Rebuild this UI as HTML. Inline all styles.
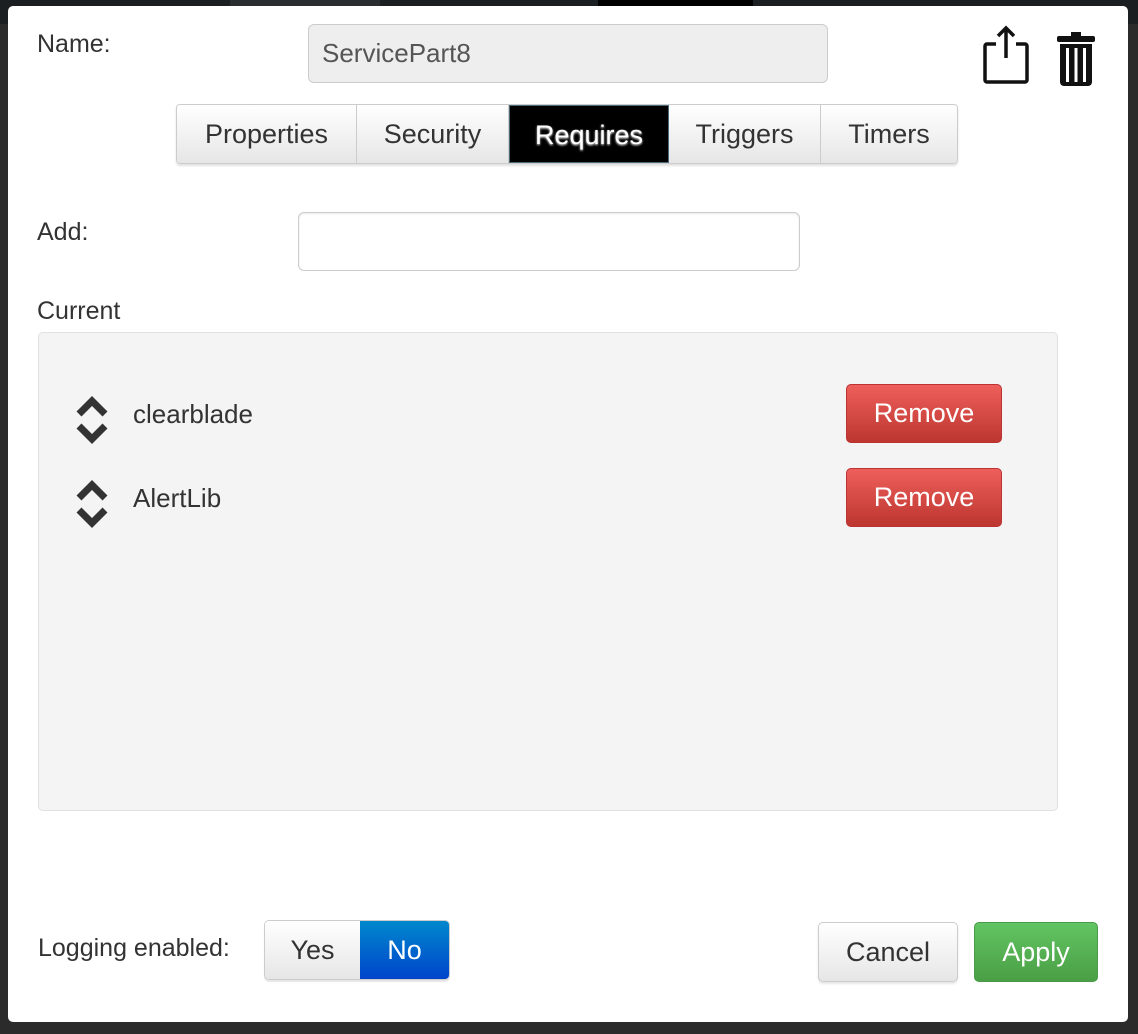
<!DOCTYPE html>
<html><head><meta charset="utf-8">
<style>
*{box-sizing:border-box;margin:0;padding:0}
body{width:1138px;height:1034px;background:#2b2b2b;position:relative;overflow:hidden;font-family:"Liberation Sans",Arial,sans-serif;color:#333}
.top{position:absolute;left:0;top:0;width:1138px;height:24px;background:#1b1f22}
.dlg{position:absolute;left:8px;top:6px;width:1120px;height:1016px;background:#fff;border-radius:5px}
.a{position:absolute}
.lbl{font-size:25px;color:#333}
.tabs{position:absolute;left:176px;top:104px;height:60px;display:flex;border:1px solid #ccc;border-radius:4px;box-shadow:0 2px 2px rgba(0,0,0,.12);overflow:hidden}
.tabs div{height:58px;line-height:58px;font-size:27px;padding:0 0;text-align:center;background:linear-gradient(#fff,#e6e6e6);border-right:1px solid #ccc;color:#333}
.tabs div.on{background:#000;color:#fff;text-shadow:0 1px 2px #fff;border:1px solid #4a6a7a}
.btn{position:absolute;border-radius:5px;font-size:27px;text-align:center}
.red{background:linear-gradient(#ee5f5b,#bd362f);color:#fff;border:1px solid #b33;width:156px;height:59px;line-height:57px;left:846px}
</style></head><body>
<div class="top"></div>
<div style="position:absolute;left:230px;top:0;width:150px;height:6px;background:#2a2e31"></div>
<div style="position:absolute;left:598px;top:0;width:155px;height:6px;background:#000"></div>
<div class="dlg"></div>
<div class="a lbl" style="left:37px;top:30px">Name:</div>
<div class="a" style="left:308px;top:24px;width:520px;height:59px;background:#eee;border:1px solid #ccc;border-radius:6px;font-size:26px;line-height:57px;padding-left:13px;color:#555">ServicePart8</div>
<svg class="a" style="left:980px;top:24px" width="52" height="62" viewBox="0 0 52 62"><path d="M16 20H7a2 2 0 0 0-2 2v34a2 2 0 0 0 2 2h38a2 2 0 0 0 2-2V22a2 2 0 0 0-2-2h-9M26 34V4M18 12l8-8 8 8" fill="none" stroke="#111" stroke-width="3.5"/></svg>
<svg class="a" style="left:1054px;top:30px" width="44" height="58" viewBox="0 0 44 58"><rect x="17" y="2" width="10" height="5" fill="#111"/><rect x="3" y="6" width="38" height="6" rx="2" fill="#111"/><path d="M6 14h32v38a4 4 0 0 1-4 4H10a4 4 0 0 1-4-4z" fill="#111"/><rect x="12" y="18" width="3" height="34" fill="#fff"/><rect x="20.5" y="18" width="3" height="34" fill="#fff"/><rect x="29" y="18" width="3" height="34" fill="#fff"/></svg>
<div class="tabs">
<div style="width:180px">Properties</div>
<div style="width:152px">Security</div>
<div class="on" style="width:160px">Requires</div>
<div style="width:152px">Triggers</div>
<div style="width:136px;border-right:0">Timers</div>
</div>
<div class="a lbl" style="left:37px;top:218px">Add:</div>
<div class="a" style="left:298px;top:212px;width:502px;height:59px;border:1px solid #ccc;border-radius:6px;box-shadow:inset 0 1px 2px rgba(0,0,0,.08)"></div>
<div class="a lbl" style="left:37px;top:297px">Current</div>
<div class="a" style="left:38px;top:332px;width:1020px;height:479px;background:#f4f4f4;border:1px solid #e0e0e0;border-radius:5px"></div>
<svg class="a" style="left:74px;top:394px" width="36" height="54" viewBox="0 0 36 54"><path d="M5 20L18 7l13 13M5 32l13 13 13-13" fill="none" stroke="#333" stroke-width="7"/></svg>
<div class="a" style="left:133px;top:399px;font-size:26px">clearblade</div>
<div class="btn red" style="top:384px">Remove</div>
<svg class="a" style="left:74px;top:478px" width="36" height="54" viewBox="0 0 36 54"><path d="M5 20L18 7l13 13M5 32l13 13 13-13" fill="none" stroke="#333" stroke-width="7"/></svg>
<div class="a" style="left:133px;top:483px;font-size:26px">AlertLib</div>
<div class="btn red" style="top:468px">Remove</div>
<div class="a lbl" style="left:38px;top:934px">Logging enabled:</div>
<div class="a" style="left:264px;top:920px;width:186px;height:60px;border:1px solid #ccc;border-radius:5px;overflow:hidden;display:flex;box-shadow:0 2px 1px rgba(0,0,0,.1)">
<div style="width:96px;background:linear-gradient(#fff,#e6e6e6);font-size:27px;line-height:58px;text-align:center">Yes</div>
<div style="width:90px;background:linear-gradient(#0088cc,#0044cc);color:#fff;font-size:27px;line-height:58px;text-align:center">No</div>
</div>
<div class="btn" style="left:818px;top:922px;width:140px;height:60px;line-height:58px;border:1px solid #ccc;background:linear-gradient(#fff,#e6e6e6);color:#333;box-shadow:0 2px 2px rgba(0,0,0,.1)">Cancel</div>
<div class="btn" style="left:974px;top:922px;width:124px;height:60px;line-height:58px;border:1px solid #4a9a4a;background:linear-gradient(#62c462,#4a9f45);color:#fff">Apply</div>
</body></html>
